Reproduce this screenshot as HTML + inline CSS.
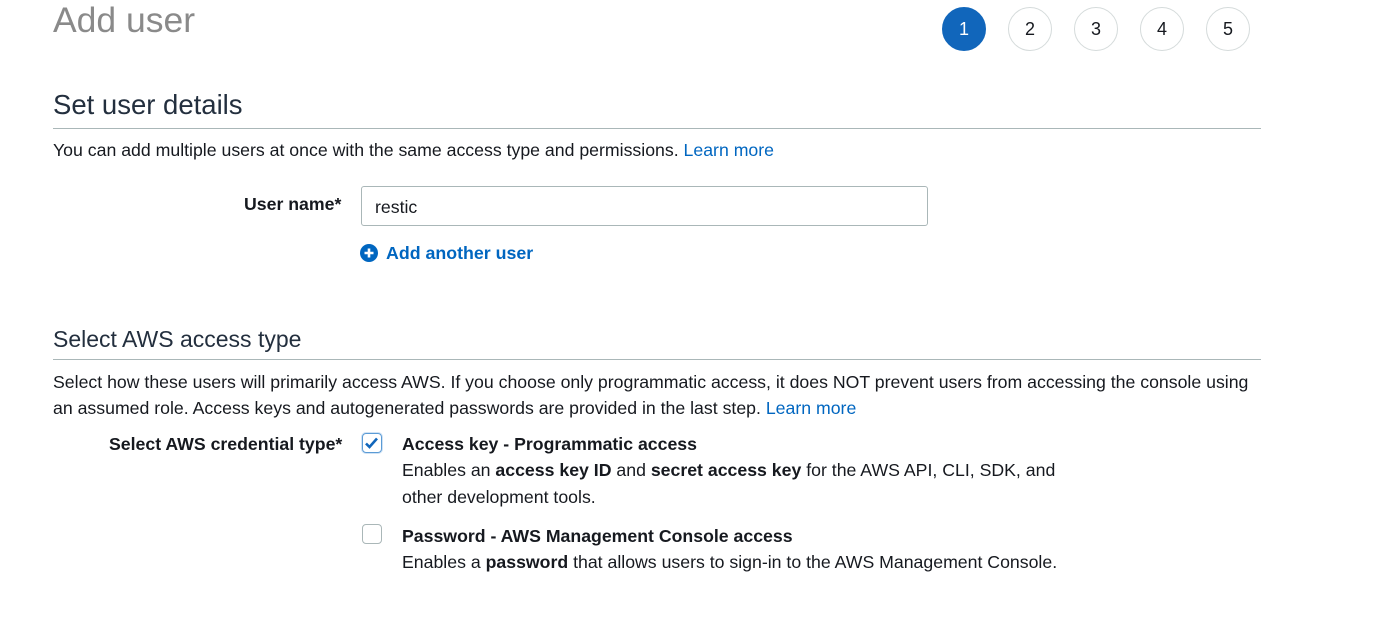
<!DOCTYPE html>
<html><head><style>
body{margin:0;width:1400px;height:642px;background:#fff;font-family:"Liberation Sans",Arial,sans-serif;color:#16191f;position:relative;overflow:hidden}
.a{position:absolute;white-space:nowrap}
.c{position:absolute;top:7px;width:42px;height:42px;border:1px solid #d5dbdb;border-radius:50%;text-align:center;line-height:42px;font-size:18px;color:#16191f;box-sizing:content-box}
.h2{font-size:25px;color:#232f3e}
.t{font-size:17.7px;color:#16191f}
a{color:#0066c0;text-decoration:none}
.hr{position:absolute;left:53px;width:1208px;height:1px;background:#aab7b8}
b{font-weight:bold}
</style></head><body>
<div class="a" style="left:53px;top:0px;font-size:35.5px;color:#8a8a8a">Add user</div>
<div class="c" style="left:942px;background:#1166bb;border-color:#1166bb;color:#fff">1</div>
<div class="c" style="left:1008px">2</div>
<div class="c" style="left:1074px">3</div>
<div class="c" style="left:1140px">4</div>
<div class="c" style="left:1206px">5</div>

<div class="a h2" style="left:53px;top:89px;font-size:27.5px">Set user details</div>
<div class="hr" style="top:128px"></div>
<div class="a t" style="left:53px;top:140px">You can add multiple users at once with the same access type and permissions. <a>Learn more</a></div>
<div class="a t" style="left:244px;top:194px;font-weight:bold">User name*</div>
<div class="a" style="left:361px;top:186px;width:565px;height:38px;border:1px solid #aab7b8;border-radius:3px"></div>
<div class="a t" style="left:375px;top:197px">restic</div>
<svg class="a" style="left:360px;top:244px" width="18" height="18" viewBox="0 0 18 18"><circle cx="9" cy="9" r="9" fill="#0066c0"/><path d="M9 4.5v9M4.5 9h9" stroke="#fff" stroke-width="2.6"/></svg>
<div class="a" style="left:386px;top:243px;font-size:17.8px;font-weight:bold;color:#0066c0">Add another user</div>

<div class="a h2" style="left:53px;top:326px;font-size:23px">Select AWS access type</div>
<div class="hr" style="top:359px"></div>
<div class="a t" style="left:53px;top:372px">Select how these users will primarily access AWS. If you choose only programmatic access, it does NOT prevent users from accessing the console using</div>
<div class="a t" style="left:53px;top:398px">an assumed role. Access keys and autogenerated passwords are provided in the last step. <a>Learn more</a></div>
<div class="a t" style="left:109px;top:434px;font-weight:bold">Select AWS credential type*</div>
<div class="a" style="left:362px;top:433px;width:18px;height:18px;border:1px solid #5b9bd5;border-radius:4px;box-shadow:0 0 0 1px #cfe2f5"></div>
<svg class="a" style="left:364px;top:436px" width="16" height="14" viewBox="0 0 16 14"><path d="M2 7.5l3.5 3.5L13 2.5" fill="none" stroke="#1166bb" stroke-width="2.6"/></svg>
<div class="a t" style="left:402px;top:434px;font-weight:bold">Access key - Programmatic access</div>
<div class="a t" style="left:402px;top:460px">Enables an <b>access key ID</b> and <b>secret access key</b> for the AWS API, CLI, SDK, and</div>
<div class="a t" style="left:402px;top:487px">other development tools.</div>
<div class="a" style="left:362px;top:524px;width:18px;height:18px;border:1px solid #aab7b8;border-radius:4px"></div>
<div class="a t" style="left:402px;top:526px;font-weight:bold">Password - AWS Management Console access</div>
<div class="a t" style="left:402px;top:552px">Enables a <b>password</b> that allows users to sign-in to the AWS Management Console.</div>
</body></html>
